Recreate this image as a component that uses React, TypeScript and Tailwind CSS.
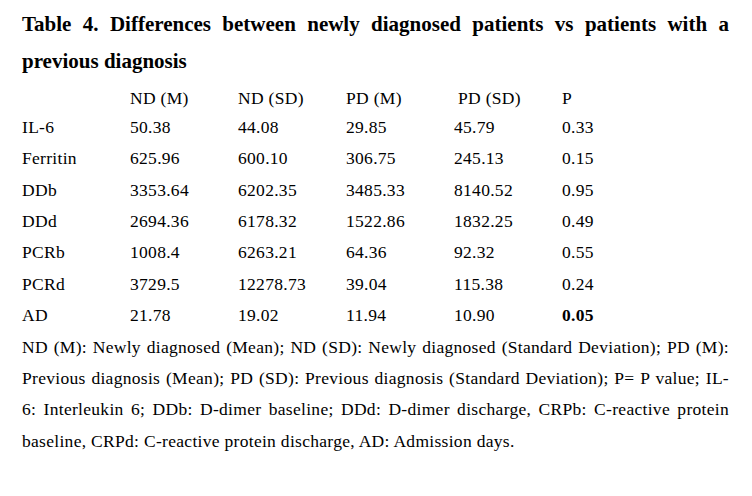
const rows: [string, string, string, string, string, string][] = [
  ["IL-6", "50.38", "44.08", "29.85", "45.79", "0.33"],
  ["Ferritin", "625.96", "600.10", "306.75", "245.13", "0.15"],
  ["DDb", "3353.64", "6202.35", "3485.33", "8140.52", "0.95"],
  ["DDd", "2694.36", "6178.32", "1522.86", "1832.25", "0.49"],
  ["PCRb", "1008.4", "6263.21", "64.36", "92.32", "0.55"],
  ["PCRd", "3729.5", "12278.73", "39.04", "115.38", "0.24"],
  ["AD", "21.78", "19.02", "11.94", "10.90", "0.05"],
]

// footnote lines as set in the source
const notes = [
  "ND (M): Newly diagnosed (Mean); ND (SD): Newly diagnosed (Standard Deviation); PD (M):",
  "Previous diagnosis (Mean); PD (SD): Previous diagnosis (Standard Deviation); P= P value; IL-",
  "6: Interleukin 6; DDb: D-dimer baseline; DDd: D-dimer discharge, CRPb: C-reactive protein",
  "baseline, CRPd: C-reactive protein discharge, AD: Admission days.",
]

function Row({ cells, bold }: { cells: string[]; bold?: boolean }) {
  return (
    <div className="grid grid-cols-[108px_108px_108px_108px_108px_1fr] h-[31.4px] leading-[31.4px]">
      {cells.map((c, i) => (
        <div key={i} className={i === 5 && bold ? "font-bold" : ""}>
          {c}
        </div>
      ))}
    </div>
  )
}

export default function App() {
  return (
    <div
      className="w-[752px] h-[496px] bg-white text-black pl-[22px] pr-[23px] pt-[6.3px]"
      style={{ fontFamily: '"Liberation Serif", "Times New Roman", serif' }}
    >
      <h2 className="text-[21px] font-bold leading-[36.6px] text-justify">
        Table 4. Differences between newly diagnosed patients vs patients with a
        previous diagnosis
      </h2>

      <div className="mt-[3.4px] text-[17.5px] tracking-[0.3px]">
        <div className="grid grid-cols-[108px_108px_108px_108px_108px_1fr] h-[29px] leading-[31.4px]">
          <div></div>
          <div>ND (M)</div>
          <div>ND (SD)</div>
          <div>PD (M)</div>
          <div className="pl-[4px]">PD (SD)</div>
          <div>P</div>
        </div>
        {rows.map((r, i) => (
          <Row key={r[0]} cells={r} bold={i === rows.length - 1} />
        ))}
      </div>

      <div className="text-[17.5px] tracking-[0.3px] leading-[31.4px]">
        {notes.map((line, i) => (
          <p
            key={i}
            className={
              i < notes.length - 1
                ? "text-justify [text-align-last:justify] whitespace-nowrap"
                : "whitespace-nowrap"
            }
          >
            {line}
          </p>
        ))}
      </div>
    </div>
  )
}
